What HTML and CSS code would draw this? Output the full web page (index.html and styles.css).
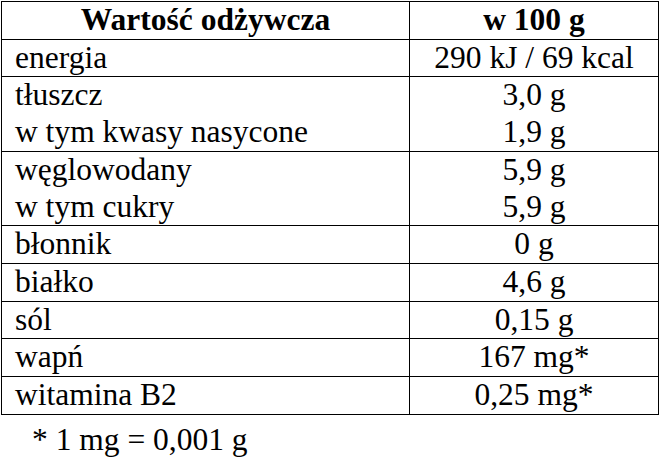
FILE: index.html
```html
<!DOCTYPE html>
<html lang="pl">
<head>
<meta charset="utf-8">
<link rel="stylesheet" href="styles.css">
</head>
<body>
<table class="nutri">
  <colgroup><col class="c-name"><col class="c-val"></colgroup>
  <thead>
    <tr><th class="name">Wartość odżywcza</th><th class="val">w 100 g</th></tr>
  </thead>
  <tbody>
    <tr><td class="name">energia</td><td class="val">290 kJ / 69 kcal</td></tr>
    <tr><td class="name">tłuszcz<br>w tym kwasy nasycone</td><td class="val">3,0 g<br>1,9 g</td></tr>
    <tr><td class="name">węglowodany<br>w tym cukry</td><td class="val">5,9 g<br>5,9 g</td></tr>
    <tr><td class="name">błonnik</td><td class="val">0 g</td></tr>
    <tr><td class="name">białko</td><td class="val">4,6 g</td></tr>
    <tr><td class="name">sól</td><td class="val">0,15 g</td></tr>
    <tr><td class="name">wapń</td><td class="val">167 mg*</td></tr>
    <tr><td class="name">witamina B2</td><td class="val">0,25 mg*</td></tr>
  </tbody>
</table>
<p class="note">* 1 mg = 0,001 g</p>
</body>
</html>
```
FILE: styles.css
```css
html, body {
  margin: 0;
  padding: 0;
  background: #fff;
}
body {
  padding: 1px 0 0 1px;
  font-family: "Liberation Serif", "Times New Roman", serif;
  font-size: 31.5px;
  line-height: 36.7px;
  color: #000;
}
.nutri {
  border-collapse: collapse;
  table-layout: fixed;
  width: 657px;
}
.c-name {
  width: 408px;
}
.c-val {
  width: 249px;
}
.nutri th, .nutri td {
  border: 1px solid #000;
  padding: 0;
  vertical-align: middle;
}
.nutri th {
  font-weight: bold;
  text-align: center;
}
.nutri td.name {
  text-align: left;
  padding-left: 13px;
}
.nutri .val {
  text-align: center;
}
.note {
  margin: 7px 0 0 31px;
}
```
